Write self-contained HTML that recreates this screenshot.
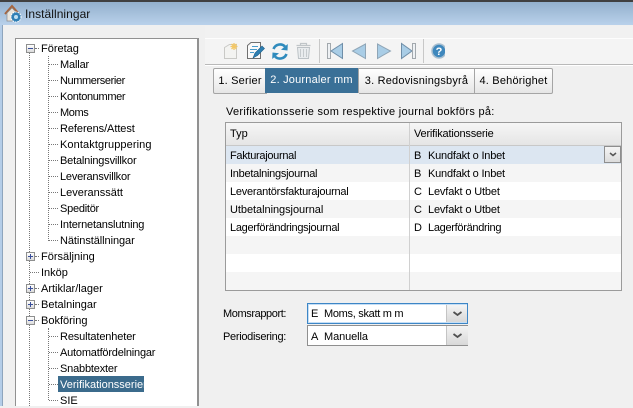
<!DOCTYPE html>
<html><head><meta charset="utf-8">
<style>
html,body{margin:0;padding:0}
body{width:633px;height:406px;overflow:hidden;position:relative;background:#f0f0f0;font-family:"Liberation Sans",sans-serif;font-size:11px;color:#000}
.a{position:absolute}
.t{position:absolute;white-space:nowrap;line-height:14px;height:14px;transform:translateY(1px)}
.h{position:absolute;border-top:1px dotted #777;height:0}
.v{position:absolute;border-left:1px dotted #777;width:0}
.pm{position:absolute;left:26px;width:7px;height:7px;border:1px solid #8e8f8f;background:linear-gradient(#fff,#dcdcdc)}
.pm i{position:absolute;left:1px;top:3px;width:5px;height:1px;background:#3a4f9a}
.pm b{position:absolute;left:3px;top:1px;width:1px;height:5px;background:#3a4f9a}
.tab{position:absolute;top:68px;height:24px;border:1px solid #a5a5a5;border-left:0;background:linear-gradient(#fff,#e6e6e6);line-height:24px;font-size:11px;letter-spacing:.2px;text-align:center;box-sizing:content-box;white-space:nowrap}
.row{position:absolute;left:226px;width:395px;height:18px}
</style></head><body>
<div class="a" style="left:0;top:0;width:633px;height:2px;background:#404040"></div>
<div class="a" style="left:0;top:2px;width:633px;height:23px;background:linear-gradient(#93b0cc,#b9d1eb)"></div>
<div class="a" style="left:0;top:25px;width:2px;height:381px;background:#b4cde8"></div>
<div class="a" style="left:2px;top:25px;width:1px;height:381px;background:#8ea5bd"></div>
<svg class="a" style="left:4px;top:4px" width="19" height="20" viewBox="0 0 19 20">
<path d="M1 10 L8 2 L15 10" fill="none" stroke="#a5653f" stroke-width="2"/>
<path d="M3 9 L3 17 L13 17 L13 9 L8 4Z" fill="#e8e4dc" stroke="#8a8a8a" stroke-width=".7"/>
<circle cx="12" cy="13" r="5" fill="#2f7fb5" stroke="#fff" stroke-dasharray="1.5 1"/>
<circle cx="12" cy="13" r="2" fill="#bfe0f2"/>
</svg>
<div class="t" style="left:25px;top:7px;font-size:12px;letter-spacing:.05px;color:#111;transform:none">Inställningar</div>

<!-- Tree -->
<div class="a" style="left:15px;top:38px;width:184px;height:368px;box-sizing:border-box;background:#fff;border-style:solid;border-width:1px 2px 0 1px;border-color:#919191"></div>
<div class="v" style="left:29px;top:53px;height:353px"></div>
<div class="v" style="left:48px;top:56px;height:185px"></div>
<div class="v" style="left:48px;top:328px;height:72px"></div>

<div class="pm" style="top:44px"><i></i></div>
<div class="h" style="left:35px;top:48px;width:4px"></div>
<div class="t" style="left:41px;top:41px">Företag</div>
<div class="h" style="left:49px;top:64px;width:9px"></div><div class="t" style="left:60px;top:57px;letter-spacing:-.15px">Mallar</div>
<div class="h" style="left:49px;top:80px;width:9px"></div><div class="t" style="left:60px;top:73px;letter-spacing:-.4px">Nummerserier</div>
<div class="h" style="left:49px;top:96px;width:9px"></div><div class="t" style="left:60px;top:89px;letter-spacing:-.35px">Kontonummer</div>
<div class="h" style="left:49px;top:112px;width:9px"></div><div class="t" style="left:60px;top:105px;letter-spacing:-.4px">Moms</div>
<div class="h" style="left:49px;top:128px;width:9px"></div><div class="t" style="left:60px;top:121px;letter-spacing:-.07px">Referens/Attest</div>
<div class="h" style="left:49px;top:144px;width:9px"></div><div class="t" style="left:60px;top:137px;letter-spacing:.1px">Kontaktgruppering</div>
<div class="h" style="left:49px;top:160px;width:9px"></div><div class="t" style="left:60px;top:153px;letter-spacing:-.18px">Betalningsvillkor</div>
<div class="h" style="left:49px;top:176px;width:9px"></div><div class="t" style="left:60px;top:169px;letter-spacing:-.2px">Leveransvillkor</div>
<div class="h" style="left:49px;top:192px;width:9px"></div><div class="t" style="left:60px;top:185px">Leveranssätt</div>
<div class="h" style="left:49px;top:208px;width:9px"></div><div class="t" style="left:60px;top:201px;letter-spacing:-.25px">Speditör</div>
<div class="h" style="left:49px;top:224px;width:9px"></div><div class="t" style="left:60px;top:217px;letter-spacing:-.18px">Internetanslutning</div>
<div class="h" style="left:49px;top:240px;width:9px"></div><div class="t" style="left:60px;top:233px;letter-spacing:-.07px">Nätinställningar</div>

<div class="pm" style="top:252px"><i></i><b></b></div>
<div class="h" style="left:35px;top:256px;width:4px"></div>
<div class="t" style="left:41px;top:249px">Försäljning</div>
<div class="h" style="left:30px;top:272px;width:9px"></div>
<div class="t" style="left:41px;top:265px">Inköp</div>
<div class="pm" style="top:284px"><i></i><b></b></div>
<div class="h" style="left:35px;top:288px;width:4px"></div>
<div class="t" style="left:41px;top:281px">Artiklar/lager</div>
<div class="pm" style="top:300px"><i></i><b></b></div>
<div class="h" style="left:35px;top:304px;width:4px"></div>
<div class="t" style="left:41px;top:297px">Betalningar</div>
<div class="pm" style="top:316px"><i></i></div>
<div class="h" style="left:35px;top:320px;width:4px"></div>
<div class="t" style="left:41px;top:313px">Bokföring</div>
<div class="h" style="left:49px;top:336px;width:9px"></div><div class="t" style="left:60px;top:329px;letter-spacing:-.13px">Resultatenheter</div>
<div class="h" style="left:49px;top:352px;width:9px"></div><div class="t" style="left:60px;top:345px;letter-spacing:-.2px">Automatfördelningar</div>
<div class="h" style="left:49px;top:368px;width:9px"></div><div class="t" style="left:60px;top:361px;letter-spacing:-.18px">Snabbtexter</div>
<div class="h" style="left:49px;top:384px;width:9px"></div>
<div class="a" style="left:58px;top:376px;width:86px;height:16px;background:#3b6b8c"></div>
<div class="t" style="left:60px;top:377px;color:#fff">Verifikationsserier</div>
<div class="h" style="left:49px;top:400px;width:9px"></div><div class="t" style="left:60px;top:393px">SIE</div>

<!-- Toolbar -->
<div class="a" style="left:205px;top:26px;width:428px;height:12px;background:#f1f1f1"></div>
<div class="a" style="left:205px;top:38px;width:428px;height:1px;background:#fdfdfd"></div>
<div class="a" style="left:205px;top:39px;width:428px;height:25px;background:#f4f4f4"></div>
<div class="a" style="left:205px;top:64px;width:428px;height:1px;background:#b9b9b9"></div>
<div class="a" style="left:205px;top:65px;width:428px;height:1px;background:#fff"></div>
<div class="a" style="left:319px;top:39px;width:1px;height:24px;background:#c8c8c8"></div>
<div class="a" style="left:423px;top:39px;width:1px;height:24px;background:#c8c8c8"></div>

<svg class="a" style="left:205px;top:36px" width="240" height="32" viewBox="205 36 240 32">
<path d="M224.500 47.500 L229.500 44.500 L236.500 44.500 L236.500 58.500 L224.500 58.500Z" fill="#f3f3f1" stroke="#c9c9c6"/>
<path d="M234 43 V50 M230.500 46.500 H237.500 M231.500 44 L236.500 49 M236.500 44 L231.500 49" stroke="#f3c766" stroke-width="1.300"/>
<path d="M247.500 45.500 L251 42.500 L260.500 42.500 L260.500 58.500 L247.500 58.500Z" fill="#fafafa" stroke="#707070"/>
<path d="M252 46.500H258M250 49.500H257M250 52.500H254" stroke="#4a9ccb"/>
<path d="M253 58 L255 53 L262 46 L264.500 48.500 L257.500 55.500Z" fill="#2d7fb2" stroke="#1f5f8a" stroke-width=".6"/>
<path d="M273.500 49 A7 7 0 0 1 285 46.500" fill="none" stroke="#2f8bbd" stroke-width="2.600"/>
<path d="M287.800 44 L287.500 50.500 L281 49.800Z" fill="#2f8bbd"/>
<path d="M286.500 54 A7 7 0 0 1 275 56.500" fill="none" stroke="#2f8bbd" stroke-width="2.600"/>
<path d="M272.200 59 L272.500 52.500 L279 53.200Z" fill="#2f8bbd"/>
<path d="M296.500 45.500 H310.500 M300.500 45 V43.500 H306.500 V45" fill="none" stroke="#c0c5c8" stroke-width="1.200"/>
<path d="M297.500 47.500 H309.500 L308.500 58.500 H298.500Z" fill="#e9ecee" stroke="#bcc2c6"/>
<path d="M300.500 49 V57 M303.500 49 V57 M306.500 49 V57" stroke="#c5cacd"/>
<rect x="327.500" y="43.500" width="3" height="15" fill="#eef1f4" stroke="#a2a8ad"/>
<path d="M342.500 43.500 V58.500 L331 51Z" fill="#a9cde6" stroke="#6f8ea8"/>
<path d="M365.500 44 V58.500 L352.500 51Z" fill="#a9cde6" stroke="#8fa5b6"/>
<path d="M377.500 44 V58.500 L390.500 51Z" fill="#a9cde6" stroke="#8fa5b6"/>
<path d="M401.500 43.500 V58.500 L412 51Z" fill="#a9cde6" stroke="#6f8ea8"/>
<rect x="412.500" y="43.500" width="3" height="15" fill="#eef1f4" stroke="#a2a8ad"/>
<circle cx="439" cy="51" r="7" fill="#3f88bd" stroke="#a9bfd0" stroke-width="1.500"/>
<text x="439" y="55" font-family="Liberation Sans" font-size="11" font-weight="bold" fill="#fff" text-anchor="middle">?</text>
</svg>

<!-- Tabs -->
<div class="tab" style="left:213px;width:52px;border-left:1px solid #a5a5a5;border-radius:2px 0 0 2px">1. Serier</div>
<div class="tab" style="left:265px;width:93px;background:#3a7097;color:#fff;border:0;height:25px;border-right:1px solid #a5a5a5">2. Journaler mm</div>
<div class="tab" style="left:359px;width:115px">3. Redovisningsbyrå</div>
<div class="tab" style="left:475px;width:77px;border-radius:0 2px 2px 0">4. Behörighet</div>

<div class="t" style="left:226px;top:104px;letter-spacing:.28px">Verifikationsserie som respektive journal bokförs på:</div>

<!-- Table -->
<div class="a" style="left:225px;top:122px;width:397px;height:169px;box-sizing:border-box;border:1px solid #9b9b9b;background:#f5f5f5"></div>
<div class="a" style="left:226px;top:123px;width:395px;height:23px;background:linear-gradient(#f6f6f6,#e4e4e4)"></div>
<div class="a" style="left:226px;top:145px;width:395px;height:1px;background:#c8c8c8"></div>
<div class="row" style="top:146px;background:#dce6f1"></div>
<div class="row" style="top:164px;background:#f5f5f5"></div>
<div class="row" style="top:182px;background:#fff"></div>
<div class="row" style="top:200px;background:#f5f5f5"></div>
<div class="row" style="top:218px;background:#fff"></div>
<div class="row" style="top:236px;background:#f5f5f5"></div>
<div class="row" style="top:254px;background:#fff"></div>
<div class="row" style="top:272px;background:#f5f5f5"></div>
<div class="a" style="left:409px;top:123px;width:1px;height:167px;background:#d0d0d0"></div>

<div class="t" style="left:230px;top:126px">Typ</div>
<div class="t" style="left:414px;top:126px;letter-spacing:-.2px">Verifikationsserie</div>
<div class="t" style="left:230px;top:148px;letter-spacing:-.3px">Fakturajournal</div>
<div class="t" style="left:230px;top:166px;letter-spacing:-.27px">Inbetalningsjournal</div>
<div class="t" style="left:230px;top:184px;letter-spacing:-.25px">Leverantörsfakturajournal</div>
<div class="t" style="left:230px;top:202px;letter-spacing:-.05px">Utbetalningsjournal</div>
<div class="t" style="left:230px;top:220px;letter-spacing:-.3px">Lagerförändringsjournal</div>
<div class="t" style="left:414px;top:148px">B</div><div class="t" style="left:428px;top:148px;letter-spacing:-.2px">Kundfakt o Inbet</div>
<div class="t" style="left:414px;top:166px">B</div><div class="t" style="left:428px;top:166px;letter-spacing:-.2px">Kundfakt o Inbet</div>
<div class="t" style="left:414px;top:184px">C</div><div class="t" style="left:428px;top:184px;letter-spacing:-.15px">Levfakt o Utbet</div>
<div class="t" style="left:414px;top:202px">C</div><div class="t" style="left:428px;top:202px;letter-spacing:-.15px">Levfakt o Utbet</div>
<div class="t" style="left:414px;top:220px">D</div><div class="t" style="left:428px;top:220px;letter-spacing:-.3px">Lagerförändring</div>

<div class="a" style="left:604px;top:146px;width:17px;height:17px;box-sizing:border-box;border:1px solid #8e8e8e;background:linear-gradient(#f5f5f5,#dcdcdc)"></div>
<svg class="a" style="left:609px;top:152px" width="8" height="5"><path d="M1 1 L4 3.500 L7 1" fill="none" stroke="#555" stroke-width="1.500"/></svg>

<!-- Combos -->
<div class="t" style="left:223px;top:306px;letter-spacing:-.4px">Momsrapport:</div>
<div class="t" style="left:223px;top:329px;letter-spacing:-.3px">Periodisering:</div>

<div class="a" style="left:307px;top:303px;width:161px;height:21px;box-sizing:border-box;border:1px solid #3d86c6;background:#fff;box-shadow:inset 0 0 0 1px #c5def5"></div>
<div class="a" style="left:446px;top:305px;width:20px;height:17px;background:linear-gradient(#f4f4f4,#d8d8d8);border-left:1px solid #c4c4c4"></div>
<svg class="a" style="left:452px;top:311px" width="11" height="6"><path d="M1.500 1 L5.500 4 L9.500 1" fill="none" stroke="#505050" stroke-width="1.800"/></svg>
<div class="t" style="left:311px;top:306px">E</div><div class="t" style="left:324px;top:306px;letter-spacing:-.3px">Moms, skatt m m</div>

<div class="a" style="left:307px;top:325px;width:161px;height:21px;box-sizing:border-box;border:1px solid #8f8f8f;background:#fff"></div>
<div class="a" style="left:446px;top:326px;width:21px;height:19px;background:linear-gradient(#f4f4f4,#d8d8d8);border-left:1px solid #c4c4c4"></div>
<svg class="a" style="left:452px;top:333px" width="11" height="6"><path d="M1.500 1 L5.500 4 L9.500 1" fill="none" stroke="#505050" stroke-width="1.800"/></svg>
<div class="t" style="left:311px;top:329px">A</div><div class="t" style="left:324px;top:329px;letter-spacing:-.1px">Manuella</div>
</body></html>
